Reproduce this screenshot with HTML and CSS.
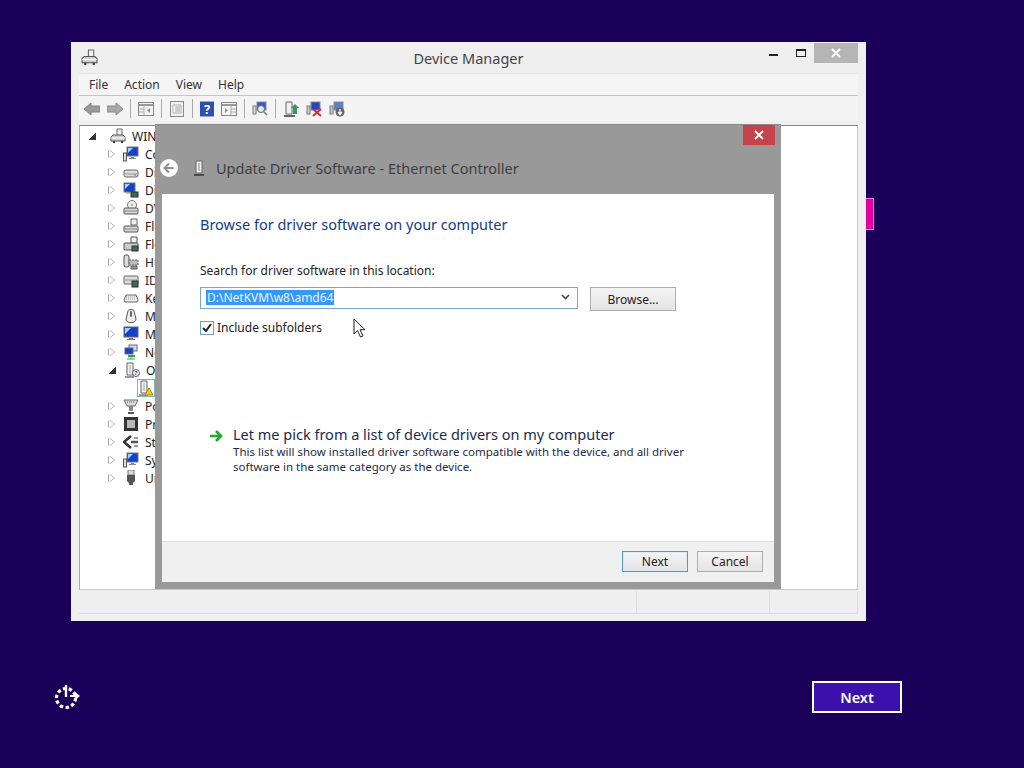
FILE: index.html
```html
<!DOCTYPE html>
<html lang="en">
<head>
    <meta charset="UTF-8">
    <title>Device Manager</title>
    <link rel="stylesheet" href="styles.css">
</head>
<body>
    <svg class="defs" width="0" height="0">
        <symbol id="i-host" viewBox="0 0 16 16"><path d="M7 1h5v7H7z" fill="#eee" stroke="#666"/><path d="M1 9l2-2h10l2 2v4H1z" fill="#cfcfcf" stroke="#555"/><path d="M1 10h14" stroke="#fff"/><path d="M3 14h2M11 14h2" stroke="#333" stroke-width="2"/></symbol>
        <symbol id="i-monitor" viewBox="0 0 16 16"><rect x="4" y="1" width="11" height="9" fill="#1540c8" stroke="#777"/><path d="M5 2h5l-5 5z" fill="#9fd0ff"/><path d="M8 11h3v1h2v1H6v-1h2z" fill="#888"/><rect x="0.5" y="7" width="3" height="8" fill="#ddd" stroke="#555"/></symbol>
        <symbol id="i-disk" viewBox="0 0 16 16"><rect x="1" y="6" width="14" height="7" rx="2" fill="#dcdcdc" stroke="#666"/><path d="M2 10h12" stroke="#999"/><path d="M11 11h2" stroke="#3a3"/></symbol>
        <symbol id="i-display" viewBox="0 0 16 16"><rect x="1" y="1" width="11" height="9" fill="#1540c8" stroke="#777"/><path d="M2 2h5l-5 5z" fill="#9fd0ff"/><rect x="8" y="10" width="7" height="5" fill="#3f6b3f" stroke="#234"/><path d="M3 11h5" stroke="#888"/></symbol>
        <symbol id="i-dvd" viewBox="0 0 16 16"><circle cx="9" cy="5" r="4.5" fill="#eee" stroke="#777"/><circle cx="9" cy="5" r="1" fill="#999"/><rect x="1" y="8" width="14" height="6" rx="1" fill="#d5d5d5" stroke="#555"/><path d="M2 11h12" stroke="#888"/></symbol>
        <symbol id="i-floppy" viewBox="0 0 16 16"><path d="M8 1h6v6H8z" fill="#eee" stroke="#666"/><rect x="1" y="8" width="14" height="6" rx="1" fill="#d5d5d5" stroke="#555"/><path d="M2 11h12" stroke="#888"/></symbol>
        <symbol id="i-floppyc" viewBox="0 0 16 16"><path d="M8 1h6v6H8z" fill="#eee" stroke="#555"/><rect x="1" y="7" width="14" height="7" rx="1" fill="#ccc" stroke="#555"/><rect x="9" y="10" width="6" height="5" fill="#3f6b3f" stroke="#234"/></symbol>
        <symbol id="i-hid" viewBox="0 0 16 16"><rect x="1" y="1" width="5" height="12" rx="2" fill="#ddd" stroke="#555"/><path d="M6 6h9v5H6z" fill="#bbb" stroke="#666" stroke-dasharray="2 1"/><path d="M8 12h6v3H8z" fill="#999" stroke="#555"/></symbol>
        <symbol id="i-ide" viewBox="0 0 16 16"><rect x="1" y="4" width="14" height="8" rx="1" fill="#ddd" stroke="#666"/><path d="M2 8h12" stroke="#999"/><rect x="9" y="9" width="6" height="6" fill="#3f6b3f" stroke="#234"/></symbol>
        <symbol id="i-keyboard" viewBox="0 0 16 16"><path d="M3 5h10l2 5-1 2H2l-1-2z" fill="#eee" stroke="#666"/><path d="M3 7h10M3 9h10" stroke="#999" stroke-dasharray="1 1"/></symbol>
        <symbol id="i-mouse" viewBox="0 0 16 16"><path d="M5 3c0-2 6-2 6 0l2 8c0 5-10 5-10 0z" fill="#eee" stroke="#555"/><rect x="7" y="3" width="2" height="6" rx="1" fill="#666"/></symbol>
        <symbol id="i-screen" viewBox="0 0 16 16"><rect x="1" y="1" width="14" height="10" fill="#1540c8" stroke="#666"/><path d="M2 2h6l-6 6z" fill="#9fd0ff"/><path d="M6 12h4v1h2v1H4v-1h2z" fill="#777"/></symbol>
        <symbol id="i-network" viewBox="0 0 16 16"><rect x="6" y="1" width="8" height="6" fill="#cde" stroke="#668"/><rect x="2" y="4" width="8" height="6" fill="#1540c8" stroke="#668"/><path d="M5 11h7v2H5z" fill="#28a745"/><path d="M8 13v2M4 15h8" stroke="#2a6"/></symbol>
        <symbol id="i-other" viewBox="0 0 16 16"><path d="M3 1h6v12H3z" fill="#f1f1f1" stroke="#666"/><path d="M5 3h2v8H5z" fill="#ccc"/><path d="M1 15h9" stroke="#333"/><circle cx="12" cy="11" r="3.5" fill="#fff" stroke="#557"/><text class="glyph" x="12" y="13.4" text-anchor="middle">?</text></symbol>
        <symbol id="i-warn" viewBox="0 0 16 16"><path d="M3 1h6v12H3z" fill="#f1f1f1" stroke="#666"/><path d="M5 3h2v8H5z" fill="#ccc"/><path d="M1 15h9" stroke="#333"/><path d="M11 8l4 7H7z" fill="#f7c81e" stroke="#a80"/></symbol>
        <symbol id="i-port" viewBox="0 0 16 16"><path d="M1 2h14l-3 6H4z" fill="#ddd" stroke="#666"/><path d="M4 4h8" stroke="#555" stroke-dasharray="1 1"/><path d="M6 8h4v5H6z" fill="#888"/><path d="M5 15h6" stroke="#555" stroke-width="2"/></symbol>
        <symbol id="i-cpu" viewBox="0 0 16 16"><rect x="1" y="1" width="14" height="14" fill="#333"/><rect x="4" y="4" width="8" height="8" fill="#b9b9b9"/></symbol>
        <symbol id="i-storage" viewBox="0 0 16 16"><path d="M8 2L1 8l7 6" fill="none" stroke="#333" stroke-width="2.5"/><path d="M8 8h7" stroke="#555" stroke-width="2.5"/><path d="M11 4h4M11 12h4" stroke="#999" stroke-width="2"/></symbol>
        <symbol id="i-usb" viewBox="0 0 16 16"><rect x="5" y="0" width="6" height="5" fill="#ddd" stroke="#777"/><path d="M4 5h8v6l-2 2v2H6v-2l-2-2z" fill="#555"/></symbol>
    </svg>

    <div class="tail"></div>

    <div class="window">
        <div class="titlebar">
            <svg class="title-icon"><use href="#i-host"/></svg>
            <span class="title-text">Device Manager</span>
            <div class="controls">
                <span class="ctl-min"></span>
                <span class="ctl-max"></span>
                <span class="ctl-close">
                    <svg width="10" height="10" viewBox="0 0 10 10"><path d="M1 1l8 8M9 1l-8 8" stroke="#fff" stroke-width="1.8"/></svg>
                </span>
            </div>
        </div>
        <div class="menubar">
            <span>File</span><span>Action</span><span>View</span><span>Help</span>
        </div>
        <div class="toolbar">
            <svg class="tool" viewBox="0 0 16 16"><path d="M0 8l7-6v3h9v6H7v3z" fill="#9a9a9a" stroke="#808080"/></svg>
            <svg class="tool" viewBox="0 0 16 16"><path d="M16 8L9 2v3H0v6h9v3z" fill="#a8a8a8" stroke="#8a8a8a"/></svg>
            <i class="sep"></i>
            <svg class="tool" viewBox="0 0 16 16"><rect x="0.5" y="1.5" width="15" height="13" fill="#f4f4f4" stroke="#888"/><path d="M1 4h14" stroke="#999" stroke-width="2"/><path d="M6 5v9M1 8h5M1 11h5" stroke="#aaa"/><path d="M12 7l-3 2.500 3 2.500z" fill="#7c9a8c"/></svg>
            <i class="sep"></i>
            <svg class="tool" viewBox="0 0 16 16"><rect x="1.500" y="0.500" width="13" height="15" fill="#f2f2f2" stroke="#8a8a8a"/><path d="M4 4h8v8H4z" fill="#fff" stroke="#aaa"/><path d="M6 6h5M6 8h5M6 10h5" stroke="#999"/></svg>
            <i class="sep"></i>
            <svg class="tool help" viewBox="0 0 15 16"><rect width="15" height="16" fill="#2c4fb0"/><text class="qmark" x="7.500" y="13" text-anchor="middle">?</text></svg>
            <svg class="tool" viewBox="0 0 16 16"><rect x="0.500" y="1.500" width="15" height="13" fill="#f4f4f4" stroke="#888"/><path d="M1 4h14" stroke="#999" stroke-width="2"/><path d="M10 5v9M10 8h5M10 11h5" stroke="#aaa"/><path d="M4 7l3 2.500-3 2.500z" fill="#7c9a8c"/></svg>
            <i class="sep"></i>
            <svg class="tool" viewBox="0 0 16 16"><rect x="5" y="1" width="9" height="8" fill="#3858c0" stroke="#889"/><rect x="1" y="5" width="3" height="8" fill="#ddd" stroke="#777"/><circle cx="9" cy="8" r="3.500" fill="#dfeaf5" stroke="#567"/><path d="M11.500 10.500L15 14" stroke="#678" stroke-width="1.500"/></svg>
            <i class="sep"></i>
            <svg class="tool" viewBox="0 0 16 16"><path d="M3 1h6v12H3z" fill="#f1f1f1" stroke="#666"/><path d="M1 15h11" stroke="#333" stroke-width="1.500"/><path d="M12 3l4 4h-2v6h-4V7H8z" fill="#2e9e5b"/></svg>
            <svg class="tool" viewBox="0 0 16 16"><rect x="5" y="1" width="9" height="8" fill="#2c44b8" stroke="#889"/><rect x="1" y="5" width="3" height="8" fill="#ccc" stroke="#777"/><path d="M7 8l8 7M15 8l-8 7" stroke="#d42c2c" stroke-width="2"/></svg>
            <svg class="tool" viewBox="0 0 16 16"><rect x="5" y="1" width="9" height="8" fill="#5f7fc8" stroke="#889"/><rect x="1" y="5" width="3" height="8" fill="#ccc" stroke="#777"/><circle cx="11" cy="11" r="4.500" fill="#666"/><path d="M11 8v5M9 11l2 2.500 2-2.500" fill="none" stroke="#fff" stroke-width="1.300"/></svg>
        </div>
        <div class="pane">
            <ul class="tree">
                <li class="root"><b class="twist open"></b><svg class="node"><use href="#i-host"/></svg>WIN-R8KVM01</li>
                <li><b class="twist"></b><svg class="node"><use href="#i-monitor"/></svg>Computer</li>
                <li><b class="twist"></b><svg class="node"><use href="#i-disk"/></svg>Disk drives</li>
                <li><b class="twist"></b><svg class="node"><use href="#i-display"/></svg>Display adapters</li>
                <li><b class="twist"></b><svg class="node"><use href="#i-dvd"/></svg>DVD/CD-ROM drives</li>
                <li><b class="twist"></b><svg class="node"><use href="#i-floppy"/></svg>Floppy disk drives</li>
                <li><b class="twist"></b><svg class="node"><use href="#i-floppyc"/></svg>Floppy drive controllers</li>
                <li><b class="twist"></b><svg class="node"><use href="#i-hid"/></svg>Human Interface Devices</li>
                <li><b class="twist"></b><svg class="node"><use href="#i-ide"/></svg>IDE ATA/ATAPI controllers</li>
                <li><b class="twist"></b><svg class="node"><use href="#i-keyboard"/></svg>Keyboards</li>
                <li><b class="twist"></b><svg class="node"><use href="#i-mouse"/></svg>Mice and other pointing devices</li>
                <li><b class="twist"></b><svg class="node"><use href="#i-screen"/></svg>Monitors</li>
                <li><b class="twist"></b><svg class="node"><use href="#i-network"/></svg>Network adapters</li>
                <li><b class="twist open"></b><svg class="node"><use href="#i-other"/></svg>Other devices</li>
                <li class="leaf"><span class="picked"><svg class="node"><use href="#i-warn"/></svg></span>Ethernet Controller</li>
                <li><b class="twist"></b><svg class="node"><use href="#i-port"/></svg>Ports (COM &amp; LPT)</li>
                <li><b class="twist"></b><svg class="node"><use href="#i-cpu"/></svg>Processors</li>
                <li><b class="twist"></b><svg class="node"><use href="#i-storage"/></svg>Storage controllers</li>
                <li><b class="twist"></b><svg class="node"><use href="#i-monitor"/></svg>System devices</li>
                <li><b class="twist"></b><svg class="node"><use href="#i-usb"/></svg>Universal Serial Bus controllers</li>
            </ul>
        </div>
        <div class="statusbar">
            <span class="st-main"></span><span class="st-mid"></span><span class="st-end"></span>
        </div>
    </div>

    <div class="dialog">
        <div class="dlg-top">
            <span class="dlg-close">
                <svg width="10" height="10" viewBox="0 0 10 10"><path d="M1 1l8 8M9 1l-8 8" stroke="#fff" stroke-width="1.800"/></svg>
            </span>
        </div>
        <div class="dlg-head">
            <svg class="back" width="18" height="18" viewBox="0 0 18 18"><circle cx="9" cy="9" r="9" fill="#fff"/><path d="M9 4.500L4.500 9 9 13.500M5 9h8.500" fill="none" stroke="#8f8f8f" stroke-width="2"/></svg>
            <svg class="dev" width="12" height="16" viewBox="0 0 12 16"><path d="M3 1h6v12H3z" fill="#eee" stroke="#666"/><path d="M5 3h2v8H5z" fill="#bbb"/><path d="M1 15h10" stroke="#333" stroke-width="1.500"/></svg>
            <span class="dlg-title">Update Driver Software - Ethernet Controller</span>
        </div>
        <div class="dlg-body">
            <div class="dlg-main">
                <h2 class="heading">Browse for driver software on your computer</h2>
                <p class="label">Search for driver software in this location:</p>
                <div class="path-row">
                    <div class="combo">
                        <span class="path">D:\NetKVM\w8\amd64</span>
                        <svg width="9" height="6" viewBox="0 0 9 6"><path d="M1 1l3.500 3.500L8 1" fill="none" stroke="#444" stroke-width="1.600"/></svg>
                    </div>
                    <span class="btn browse">Browse...</span>
                </div>
                <div class="check-row">
                    <svg class="check" width="14" height="14" viewBox="0 0 14 14"><rect x="0.500" y="0.500" width="13" height="13" fill="#fff" stroke="#6f9ccc"/><path d="M3 7l3 3 5-7" fill="none" stroke="#222" stroke-width="2"/></svg>
                    <span>Include subfolders</span>
                </div>
                <div class="pick">
                    <svg class="pick-arrow" width="14" height="12" viewBox="0 0 14 12"><path d="M7 1l5 5-5 5M1 6h10" fill="none" stroke="#1fa832" stroke-width="2.600"/></svg>
                    <div>
                        <div class="pick-title">Let me pick from a list of device drivers on my computer</div>
                        <div class="pick-desc">This list will show installed driver software compatible with the device, and all driver<br>software in the same category as the device.</div>
                    </div>
                </div>
            </div>
            <div class="dlg-foot">
                <span class="btn default">Next</span>
                <span class="btn">Cancel</span>
            </div>
        </div>
    </div>

    <svg class="pointer" width="15" height="21" viewBox="0 0 15 21"><path d="M1 1v15l3.500-3.500 3 6.500 2.500-1-3-6.300h5z" fill="#fff" stroke="#222"/></svg>

    <div class="setup-bar">
        <svg width="26" height="26" viewBox="0 0 26 26"><circle cx="12" cy="14" r="9.500" fill="none" stroke="#fff" stroke-width="3.200" stroke-dasharray="3.500 2.400"/><path d="M12 1v12" stroke="#fff" stroke-width="2.400"/><path d="M16 12h8M20.500 8.500L24.500 12l-4 3.500" fill="none" stroke="#fff" stroke-width="2"/></svg>
        <span class="setup-next">Next</span>
    </div>
</body>
</html>
```

FILE: styles.css
```css
* {
    box-sizing: border-box;
}

body {
    margin: 0;
    width: 1024px;
    height: 768px;
    overflow: hidden;
    position: relative;
    display: flex;
    flex-direction: column;
    justify-content: flex-end;
    background: #1a0058;
    font-family: "Noto Sans", "Open Sans", sans-serif;
    font-size: 12px;
    color: #222;
}

.defs {
    position: absolute;
}

.glyph {
    font-size: 6px;
    font-weight: 700;
    fill: #335;
}

.qmark {
    font-size: 14px;
    font-weight: 700;
    fill: #fff;
}

/* bit of another window poking out behind device manager */
.tail {
    position: absolute;
    left: 860px;
    top: 198px;
    width: 14px;
    height: 32px;
    background: #e000a0;
    border: 1px solid #f070d0;
}

.window {
    position: absolute;
    left: 71px;
    top: 42px;
    width: 795px;
    height: 579px;
    padding: 0 8px 7px;
    display: flex;
    flex-direction: column;
    background: #efefef;
}

.titlebar {
    height: 31px;
    flex: none;
    position: relative;
    display: flex;
    align-items: center;
    justify-content: center;
}

.title-icon {
    position: absolute;
    left: 2px;
    top: 7px;
    width: 17px;
    height: 17px;
}

.title-text {
    font-size: 14.5px;
    color: #444;
    margin-top: 1px;
}

.controls {
    position: absolute;
    right: 0;
    top: 1px;
    display: flex;
    align-items: flex-start;
}

.ctl-min {
    width: 9px;
    height: 2px;
    margin: 11px 18px 0 0;
    background: #222;
}

.ctl-max {
    width: 10px;
    height: 8px;
    margin: 6px 8px 0 0;
    border: 1px solid #222;
    border-top-width: 2px;
}

.ctl-close {
    width: 44px;
    height: 20px;
    display: flex;
    align-items: center;
    justify-content: center;
    background: #b5b5b5;
}

.menubar {
    height: 23px;
    flex: none;
    display: flex;
    align-items: center;
    gap: 16px;
    padding-left: 10px;
    background: #f5f5f5;
    border-top: 1px solid #e4e4e4;
    border-bottom: 1px solid #c4c4c4;
    color: #333;
}

.toolbar {
    height: 25px;
    flex: none;
    display: flex;
    align-items: center;
    gap: 7px;
    padding-left: 5px;
    background: #f4f4f4;
}

.tool {
    width: 16px;
    height: 16px;
    flex: none;
}

.help {
    width: 14px;
}

.sep {
    width: 1px;
    height: 19px;
    background: #aaa;
}

.pane {
    height: 465px;
    flex: none;
    margin-top: 4px;
    background: #fff;
    border: 1px solid #c8c8c8;
    border-top-color: #8a8a8a;
    border-left-color: #aaa;
    overflow: hidden;
}

.tree {
    list-style: none;
    margin: 0;
    padding: 1px 0 0 9px;
}

.tree li {
    height: 18px;
    display: flex;
    align-items: center;
    padding-left: 20px;
    white-space: nowrap;
    color: #222;
}

.tree .root {
    padding-left: 0;
}

.tree .leaf {
    padding-left: 49px;
}

.twist {
    width: 0;
    height: 0;
    margin-right: 9px;
    border-left: 5px solid #fff;
    border-top: 4px solid transparent;
    border-bottom: 4px solid transparent;
    flex: none;
    position: relative;
    filter: drop-shadow(1px 0 0 #aaa) drop-shadow(-1px 0 0 #aaa);
}

.twist.open {
    width: 7px;
    height: 7px;
    margin-right: 8px;
    border: 0;
    background: linear-gradient(135deg, transparent 50%, #333 50%);
    filter: none;
}

.root .twist.open {
    margin-left: 0;
}

.node {
    width: 16px;
    height: 16px;
    flex: none;
    margin-right: 6px;
}

.root .node {
    margin-left: 6px;
}

.picked {
    display: flex;
    flex: none;
    outline: 1px solid #7fb5b5;
    margin-right: 6px;
}

.picked .node {
    margin: 0;
}

.statusbar {
    flex: 1;
    margin-top: 1px;
    display: flex;
    border-bottom: 1px solid #ddd;
}

.statusbar span {
    border-right: 1px solid #ddd;
}

.st-main {
    width: 558px;
}

.st-mid {
    width: 133px;
}

.st-end {
    flex: 1;
}

.dialog {
    position: absolute;
    left: 155px;
    top: 124px;
    width: 626px;
    height: 465px;
    display: flex;
    flex-direction: column;
    padding: 0 7px 7px;
    background: #999;
    border-top: 1px solid #8a8a8a;
}

.dlg-top {
    height: 21px;
    flex: none;
    display: flex;
    justify-content: flex-end;
    margin-right: -1px;
}

.dlg-close {
    width: 32px;
    height: 20px;
    display: flex;
    align-items: center;
    justify-content: center;
    background: #c7434c;
}

.dlg-head {
    height: 48px;
    flex: none;
    display: flex;
    align-items: center;
    padding-bottom: 4px;
}

.back {
    margin: 0 0 0 -2px;
}

.dev {
    margin-left: 15px;
}

.dlg-title {
    margin-left: 11px;
    font-size: 14.5px;
    color: #3f3f3f;
}

.dlg-body {
    flex: 1;
    display: flex;
    flex-direction: column;
    background: #fff;
}

.dlg-main {
    flex: 1;
    padding: 20px 38px 0;
}

.heading {
    margin: 0;
    font-size: 14.5px;
    font-weight: 400;
    line-height: 20px;
    color: #153a8a;
}

.label {
    margin: 29px 0 8px;
    line-height: 16px;
}

.path-row {
    display: flex;
    align-items: flex-start;
    gap: 12px;
}

.combo {
    width: 378px;
    height: 22px;
    display: flex;
    align-items: center;
    justify-content: space-between;
    padding: 0 7px 2px 5px;
    border: 1px solid #7da2ce;
}

.path {
    padding: 0 1px;
    line-height: 15px;
    background: #3399ff;
    color: #eaf4ff;
}

.btn {
    width: 66px;
    height: 21px;
    display: flex;
    align-items: center;
    justify-content: center;
    background: linear-gradient(#f4f4f4, #e4e4e4);
    border: 1px solid #adadad;
    color: #222;
}

.browse {
    width: 86px;
    height: 24px;
}

.check-row {
    display: flex;
    align-items: center;
    gap: 3px;
    margin-top: 8px;
    color: #222;
}

.pick {
    display: flex;
    align-items: flex-start;
    margin: 88px 0 0 9px;
}

.pick-arrow {
    flex: none;
    margin: 6px 10px 0 0;
}

.pick-title {
    font-size: 14.5px;
    line-height: 20px;
    color: #1d2a4d;
}

.pick-desc {
    font-size: 11.5px;
    line-height: 15px;
    color: #1d2a4d;
}

.dlg-foot {
    height: 41px;
    flex: none;
    display: flex;
    justify-content: flex-end;
    gap: 9px;
    padding: 9px 11px 0 0;
    background: #f0f0f0;
    border-top: 1px solid #dfdfdf;
}

.default {
    border-color: #4f94d4;
    box-shadow: inset 0 0 0 1px #dcecfa;
}

.pointer {
    position: absolute;
    left: 353px;
    top: 318px;
}

.setup-bar {
    display: flex;
    justify-content: space-between;
    align-items: center;
    padding: 0 122px 55px 54px;
}

.setup-next {
    width: 90px;
    height: 32px;
    display: flex;
    align-items: center;
    justify-content: center;
    background: #3c10ac;
    border: 2px solid #fff;
    color: #fff;
    font-size: 14.5px;
    font-weight: 600;
}
```
